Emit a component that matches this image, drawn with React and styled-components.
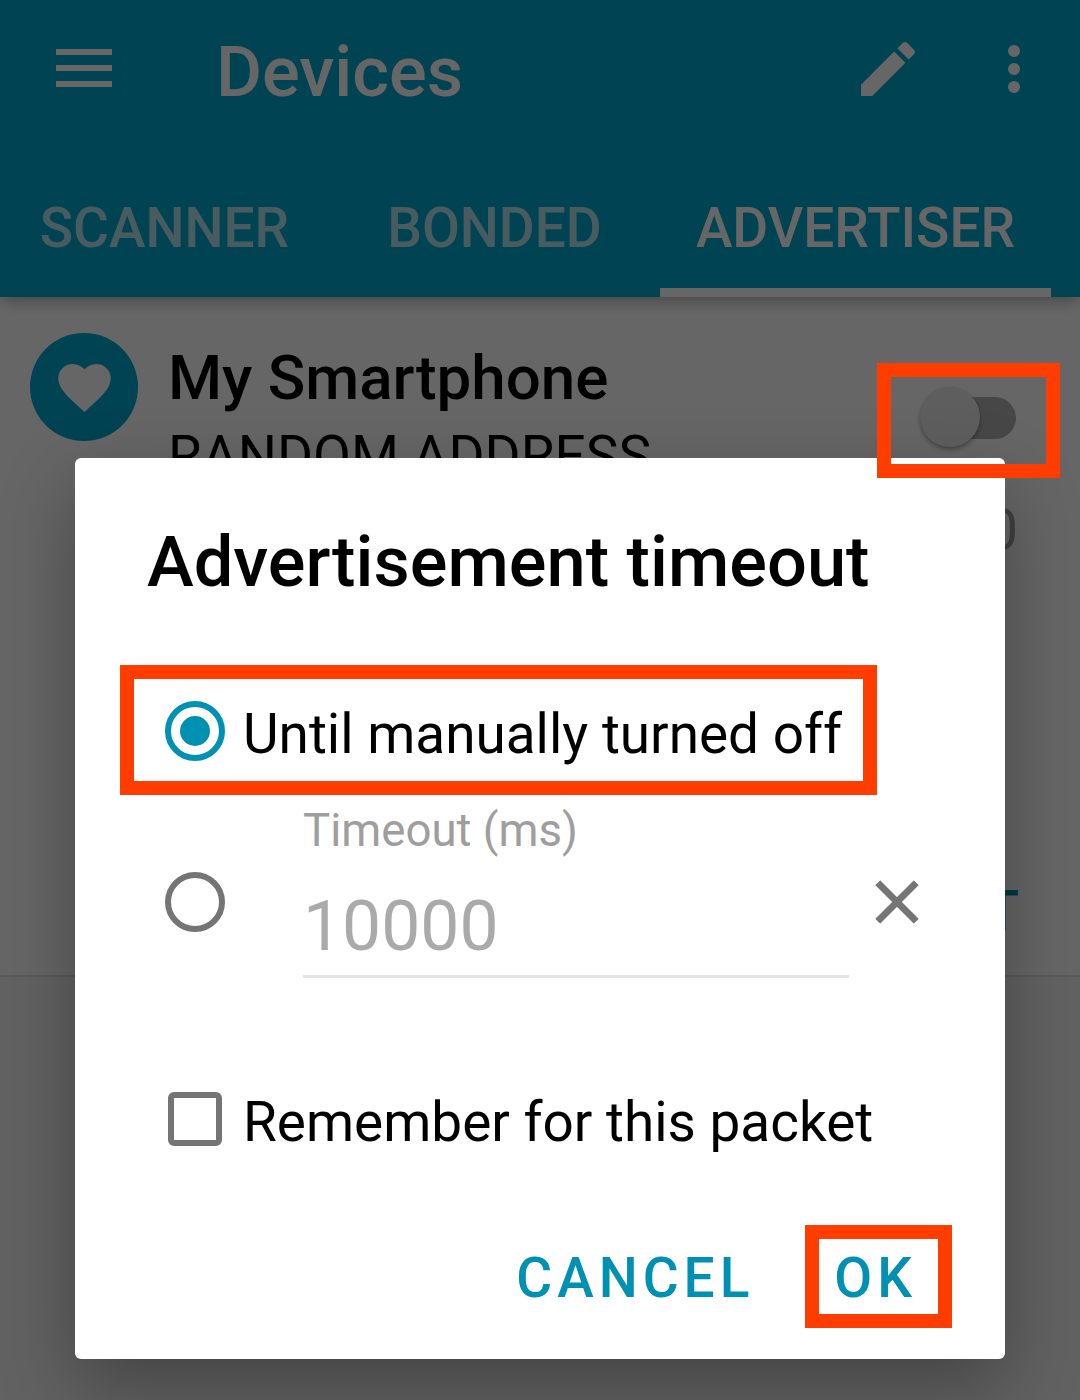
import React from 'react';
import styled, { createGlobalStyle } from 'styled-components';

const GlobalStyle = createGlobalStyle`
  *, *::before, *::after { box-sizing: border-box; }
  body { margin: 0; background: #666; }
  button { font: inherit; color: inherit; background: none; border: 0; padding: 0; }
`;

const Screen = styled.div`
  position: relative;
  width: 1080px;
  height: 1400px;
  overflow: hidden;
  background: #f5f5f5;
  font-family: Roboto, 'Liberation Sans', sans-serif;
  color: #000;
  white-space: nowrap;
`;

/* App bar */

const AppBar = styled.header`
  position: relative;
  height: 297px;
  display: flex;
  flex-direction: column;
  justify-content: space-between;
  background: #00a9ce;
  color: #fff;
  box-shadow: 0 6px 14px -2px rgba(0, 0, 0, 0.3);
`;

const Toolbar = styled.div`
  display: flex;
  align-items: flex-start;
  padding: 31px 30px 0 56px;
`;

const MenuIcon = styled.button`
  width: 56px;
  height: 38px;
  margin: 18px 104px 0 0;
  display: flex;
  flex-direction: column;
  justify-content: space-between;
`;

const MenuLine = styled.span`
  height: 6px;
  background: currentColor;
`;

const ScreenTitle = styled.h1`
  flex: 1;
  margin: 0;
  font-size: 70.5px;
  line-height: 82px;
  font-weight: 500;
`;

const IconButton = styled.button`
  width: 72px;
  height: 72px;
  margin-top: 2px;
  margin-left: ${(p) => p.$gap || 0}px;
  display: flex;

  svg {
    width: 72px;
    height: 72px;
    fill: currentColor;
  }
`;

const Tabs = styled.nav`
  display: grid;
  grid-template-columns: 329px 331px 391px;
  height: 101px;
`;

const Tab = styled.button`
  display: flex;
  justify-content: center;
  align-items: flex-start;
  font-size: 55px;
  line-height: 64px;
  font-weight: 500;
  color: ${(p) => (p.$active ? '#fff' : 'rgba(255, 255, 255, 0.7)')};
  border-bottom: 9px solid ${(p) => (p.$active ? '#fff' : 'transparent')};
`;

/* Advertiser list */

const PacketCard = styled.section`
  height: 680px;
  display: flex;
  align-items: flex-start;
  padding: 36px 62px 0 30px;
  background: #fff;
  border-bottom: 2px solid #e0e0e0;
`;

const Avatar = styled.div`
  width: 108px;
  height: 108px;
  margin-right: 30px;
  padding-top: 1px;
  display: grid;
  place-items: center;
  border-radius: 50%;
  background: #00a9ce;

  svg {
    width: 63px;
    height: 63px;
    fill: #fff;
  }
`;

const PacketInfo = styled.div`
  flex: 1;
  padding-top: 9px;
`;

const PacketName = styled.h2`
  margin: 0 0 9px;
  font-size: 61.9px;
  line-height: 73px;
  font-weight: 500;
`;

const PacketAddress = styled.div`
  font-size: 55px;
  line-height: 64px;
`;

const PacketSide = styled.div`
  display: flex;
  flex-direction: column;
  align-items: flex-end;
  padding-top: 54px;
  font-size: 55px;
  line-height: 64px;
`;

const Switch = styled.div`
  isolation: isolate;
  display: flex;
  align-items: center;
  width: 96px;
  height: 60px;
  margin: 0 2px 51px 0;

  &::after {
    content: '';
    width: 66px;
    height: 42px;
    margin-left: -30px;
    margin-top: 2px;
    border-radius: 0 21px 21px 0;
    background: #b2b2b2;
  }
`;

const SwitchThumb = styled.span`
  position: relative;
  z-index: 1;
  width: 60px;
  height: 60px;
  border-radius: 50%;
  background: #ececec;
  box-shadow: 0 3px 4px rgba(0, 0, 0, 0.28), 0 0 2px rgba(0, 0, 0, 0.12);
`;

const PacketValue = styled.div`
  margin-bottom: 317px;
  color: #a0a0a0;
`;

const PacketAction = styled.button`
  margin-right: -1px;
  color: #0090b2;
  font-weight: 500;
`;

/* Dialog */

const Scrim = styled.div`
  position: absolute;
  z-index: 1;
  inset: 0;
  display: flex;
  justify-content: center;
  align-items: flex-start;
  padding-top: 458px;
  background: rgba(0, 0, 0, 0.6);
`;

const Dialog = styled.div`
  width: 930px;
  height: 901px;
  padding: 63px 72px 0;
  border-radius: 6px;
  background: #fff;
  box-shadow: 0 28px 74px rgba(0, 0, 0, 0.31);
`;

const DialogTitle = styled.h2`
  margin: 0 0 80px;
  font-size: 70.4px;
  line-height: 82px;
  font-weight: 500;
`;

const OptionRow = styled.label`
  position: relative;
  display: flex;
  align-items: center;
  height: 96px;
  margin-top: ${(p) => p.$offset || 0}px;
`;

const ControlBox = styled.span`
  flex: none;
  width: 96px;
  height: 96px;
  display: grid;
  place-items: center;
`;

const RadioRing = styled.span`
  width: 60px;
  height: 60px;
  display: grid;
  place-items: center;
  border: 6px solid ${(p) => (p.$checked ? '#0090b2' : '#757575')};
  border-radius: 50%;

  &::after {
    content: '';
    width: 30px;
    height: 30px;
    border-radius: 50%;
    background: ${(p) => (p.$checked ? '#0090b2' : 'transparent')};
  }
`;

const CheckSquare = styled.span`
  width: 54px;
  height: 54px;
  border: 6px solid #757575;
  border-radius: 6px;
`;

const OptionText = styled.span`
  padding-top: 6px;
  font-size: 54.9px;
  line-height: 64px;
`;

const TimeoutRow = styled.div`
  display: flex;
  align-items: flex-start;
  margin-top: 24px;

  ${ControlBox} {
    margin: 51px 60px 0 0;
  }
`;

const TimeoutField = styled.div`
  width: 546px;
  height: 175px;
  padding-top: 1px;
  border-bottom: 3px solid #e4e4e4;
`;

const FieldLabel = styled.div`
  margin-bottom: 27px;
  font-size: 45.6px;
  line-height: 54px;
  color: #9e9e9e;
`;

const FieldValue = styled.div`
  font-size: 69.6px;
  line-height: 82px;
  color: #aaa;
`;

const ClearButton = styled.button`
  width: 72px;
  height: 72px;
  margin: 63px 0 0 12px;

  svg {
    display: block;
    width: 72px;
    height: 72px;
    fill: #757575;
    stroke: #757575;
    stroke-width: 0.35;
    stroke-linejoin: round;
  }
`;

const Actions = styled.div`
  display: flex;
  justify-content: flex-end;
  gap: 80px;
  margin-top: 79px;
  padding-right: 16px;
`;

const ActionButton = styled.button`
  position: relative;
  font-size: 55px;
  line-height: 64px;
  font-weight: 500;
  letter-spacing: 5px;
  color: #0090b2;
`;

/* Tutorial call-outs laid over the controls */

const Callout = styled.span`
  position: absolute;
  border: 14px solid #ff3d00;
  pointer-events: none;
`;

const SwitchCallout = styled(Callout)`
  z-index: 2;
  top: 363px;
  left: 877px;
  width: 183px;
  height: 115px;
`;

const OptionCallout = styled(Callout)`
  top: -18px;
  left: -27px;
  width: 757px;
  height: 130px;
`;

const ButtonCallout = styled(Callout)`
  top: -21px;
  left: -29px;
  width: 147px;
  height: 103px;
`;

const TABS = ['SCANNER', 'BONDED', 'ADVERTISER'];

export default function App() {
  return (
    <>
      <GlobalStyle />
      <Screen>
        <AppBar>
          <Toolbar>
            <MenuIcon aria-label="Menu">
              <MenuLine />
              <MenuLine />
              <MenuLine />
            </MenuIcon>
            <ScreenTitle>Devices</ScreenTitle>
            <IconButton aria-label="Edit">
              <svg viewBox="0 0 24 24">
                <path d="M3 17.25V21h3.75L17.81 9.94l-3.75-3.75L3 17.25zM20.71 7.04c.39-.39.39-1.02 0-1.41l-2.34-2.34c-.39-.39-1.02-.39-1.41 0l-1.83 1.83 3.75 3.75 1.83-1.83z" />
              </svg>
            </IconButton>
            <IconButton $gap={54} aria-label="More">
              <svg viewBox="0 0 24 24">
                <circle cx="12" cy="6" r="2" />
                <circle cx="12" cy="12" r="2" />
                <circle cx="12" cy="18" r="2" />
              </svg>
            </IconButton>
          </Toolbar>
          <Tabs>
            {TABS.map((name) => (
              <Tab key={name} $active={name === 'ADVERTISER'}>
                {name}
              </Tab>
            ))}
          </Tabs>
        </AppBar>

        <PacketCard>
          <Avatar>
            <svg viewBox="0 0 24 24">
              <path d="M12 21.35l-1.45-1.32C5.4 15.36 2 12.28 2 8.5 2 5.42 4.42 3 7.5 3c1.74 0 3.41.81 4.5 2.09C13.09 3.81 14.76 3 16.5 3 19.58 3 22 5.42 22 8.5c0 3.78-3.4 6.86-8.55 11.54L12 21.35z" />
            </svg>
          </Avatar>
          <PacketInfo>
            <PacketName>My Smartphone</PacketName>
            <PacketAddress>RANDOM ADDRESS</PacketAddress>
          </PacketInfo>
          <PacketSide>
            <Switch>
              <SwitchThumb />
            </Switch>
            <PacketValue>0</PacketValue>
            <PacketAction>T</PacketAction>
          </PacketSide>
        </PacketCard>

        <Scrim>
          <Dialog role="dialog">
            <DialogTitle>Advertisement timeout</DialogTitle>
            <OptionRow>
              <ControlBox>
                <RadioRing $checked />
              </ControlBox>
              <OptionText>Until manually turned off</OptionText>
              <OptionCallout />
            </OptionRow>
            <TimeoutRow>
              <ControlBox>
                <RadioRing />
              </ControlBox>
              <TimeoutField>
                <FieldLabel>Timeout (ms)</FieldLabel>
                <FieldValue>10000</FieldValue>
              </TimeoutField>
              <ClearButton aria-label="Clear">
                <svg viewBox="0 0 24 24">
                  <path d="M19 6.41L17.59 5 12 10.59 6.41 5 5 6.41 10.59 12 5 17.59 6.41 19 12 13.41 17.59 19 19 17.59 13.41 12z" />
                </svg>
              </ClearButton>
            </TimeoutRow>
            <OptionRow $offset={93}>
              <ControlBox>
                <CheckSquare />
              </ControlBox>
              <OptionText>Remember for this packet</OptionText>
            </OptionRow>
            <Actions>
              <ActionButton>CANCEL</ActionButton>
              <ActionButton>
                OK
                <ButtonCallout />
              </ActionButton>
            </Actions>
          </Dialog>
        </Scrim>

        <SwitchCallout />
      </Screen>
    </>
  );
}
